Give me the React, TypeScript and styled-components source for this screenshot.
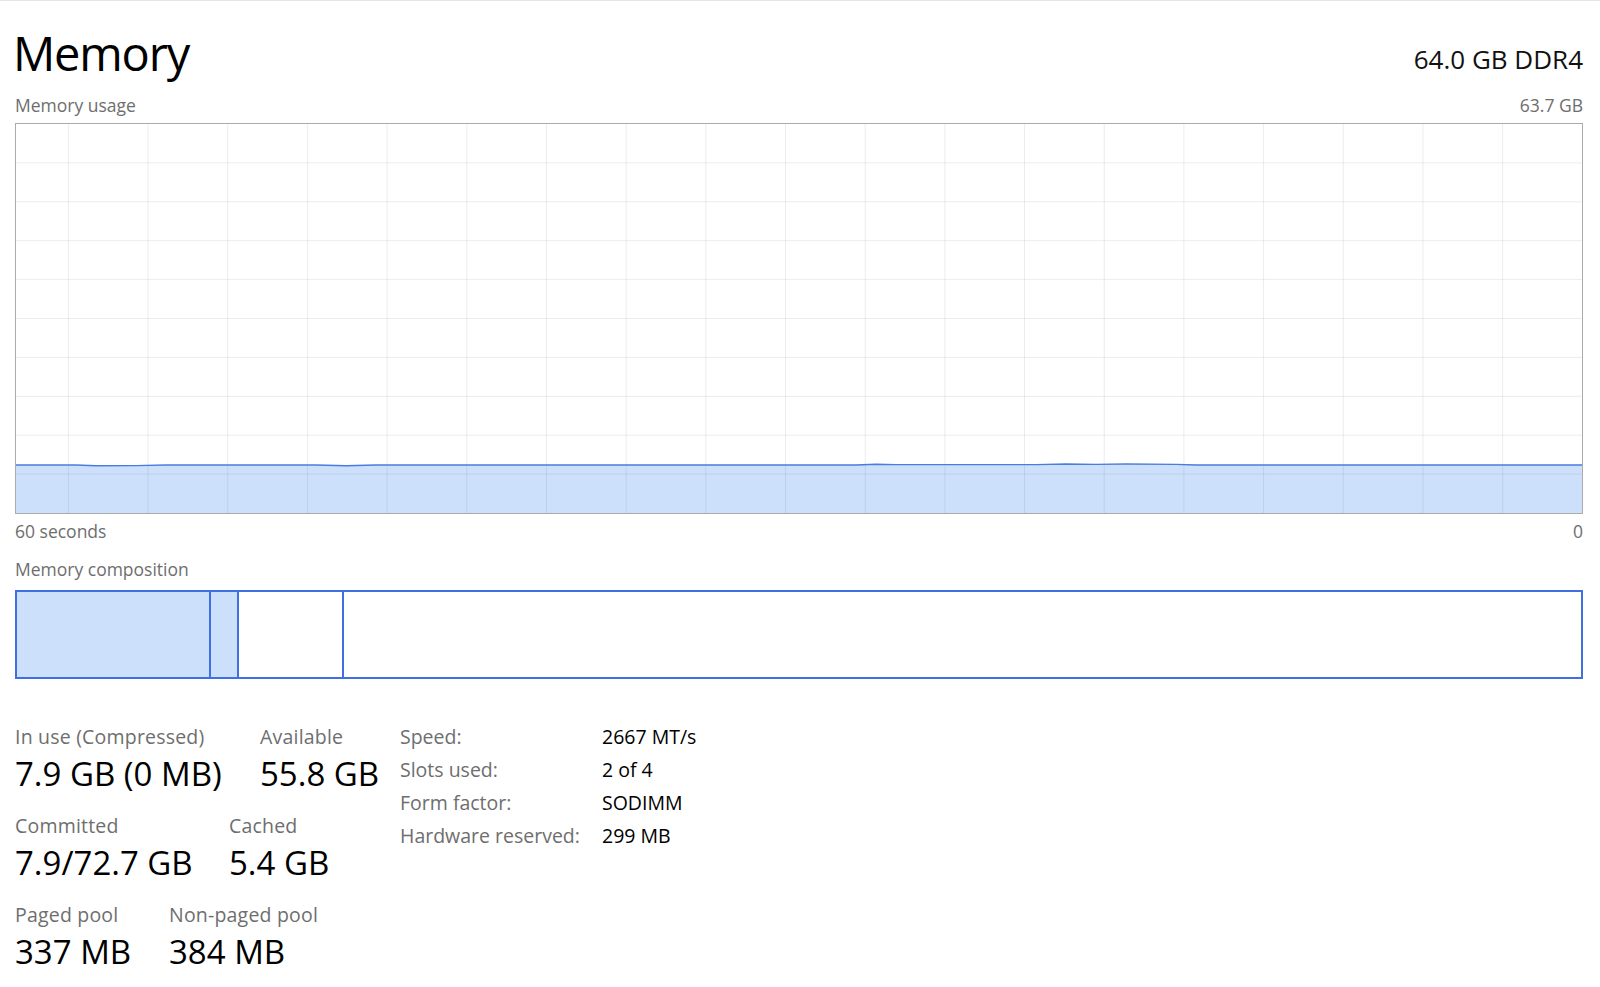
import styled, { createGlobalStyle } from "styled-components";

const GlobalStyle = createGlobalStyle`
  html, body {
    margin: 0;
    padding: 0;
    background: #ffffff;
  }
  body {
    font-family: "Open Sans", "Noto Sans", sans-serif;
    color: #000000;
  }
`;

type Stat = { label: string; value: string };

const statRows: { width: number; items: Stat[] }[] = [
  {
    width: 245,
    items: [
      { label: "In use (Compressed)", value: "7.9 GB (0 MB)" },
      { label: "Available", value: "55.8 GB" },
    ],
  },
  {
    width: 214,
    items: [
      { label: "Committed", value: "7.9/72.7 GB" },
      { label: "Cached", value: "5.4 GB" },
    ],
  },
  {
    width: 154,
    items: [
      { label: "Paged pool", value: "337 MB" },
      { label: "Non-paged pool", value: "384 MB" },
    ],
  },
];

const specs: Stat[] = [
  { label: "Speed:", value: "2667 MT/s" },
  { label: "Slots used:", value: "2 of 4" },
  { label: "Form factor:", value: "SODIMM" },
  { label: "Hardware reserved:", value: "299 MB" },
];

// composition segments: width incl. divider, filled or not
const segments = [
  { width: 194, filled: true },
  { width: 28, filled: true },
  { width: 105, filled: false },
  { width: 0, filled: false },
];

const CHART_W = 1566;
const CHART_H = 389;

const UsageChart = () => {
  const cols = Array.from({ length: 19 }, (_, i) => 52.4 + i * 79.68);
  const rows = Array.from({ length: 9 }, (_, i) => (i + 1) * (CHART_H / 10));
  const line =
    "M0 341 L60 341 L80 341.8 L120 341.6 L150 341 L300 341 L330 341.8 L360 341 L840 341 L860 340.2 L880 340.6 L1020 340.6 L1050 340 L1080 340.4 L1110 340 L1160 340.4 L1180 341 L1566 341";
  return (
    <svg
      width="100%"
      height="100%"
      viewBox={`0 0 ${CHART_W} ${CHART_H}`}
      preserveAspectRatio="none"
    >
      <path d={`${line} L1566 ${CHART_H} L0 ${CHART_H} Z`} fill="#cde0fb" />
      {cols.map((x) => (
        <line key={x} x1={x} x2={x} y1={0} y2={CHART_H} stroke="rgba(0,0,0,0.075)" strokeWidth={1} />
      ))}
      {rows.map((y) => (
        <line key={y} x1={0} x2={CHART_W} y1={y} y2={y} stroke="rgba(0,0,0,0.075)" strokeWidth={1} />
      ))}
      <path d={line} fill="none" stroke="#4a7be0" strokeWidth={1.4} />
    </svg>
  );
};

const App = () => {
  return (
    <Page>
      <GlobalStyle />
      <Header>
        <Title>Memory</Title>
        <Capacity>64.0 GB DDR4</Capacity>
      </Header>
      <Caption>
        <span>Memory usage</span>
        <span>63.7 GB</span>
      </Caption>
      <Graph>
        <UsageChart />
      </Graph>
      <AxisRow>
        <span>60 seconds</span>
        <span>0</span>
      </AxisRow>
      <CompositionTitle>Memory composition</CompositionTitle>
      <CompositionBar>
        {segments.map((s, i) => (
          <Segment key={i} $width={s.width} $filled={s.filled} />
        ))}
      </CompositionBar>
      <Details>
        <Stats>
          {statRows.map((row, i) => (
            <StatRow key={i} $first={row.width}>
              {row.items.map((it) => (
                <StatItem key={it.label}>
                  <StatLabel>{it.label}</StatLabel>
                  <StatValue>{it.value}</StatValue>
                </StatItem>
              ))}
            </StatRow>
          ))}
        </Stats>
        <SpecTable>
          {specs.map((s) => (
            <SpecRow key={s.label}>
              <SpecLabel>{s.label}</SpecLabel>
              <SpecValue>{s.value}</SpecValue>
            </SpecRow>
          ))}
        </SpecTable>
      </Details>
    </Page>
  );
};

const Page = styled.div`
  box-sizing: border-box;
  width: 1600px;
  height: 987px;
  border-top: 1px solid #e6e6e6;
  padding: 0 17px 0 15px;
  overflow: hidden;
`;

const Header = styled.div`
  display: flex;
  justify-content: space-between;
  align-items: flex-start;
  padding-top: 28px;
`;

const Title = styled.h1`
  margin: 0 0 0 -2px;
  font-size: 47px;
  line-height: 48px;
  font-weight: 400;
  letter-spacing: -1.2px;
  color: #000;
`;

const Capacity = styled.div`
  margin-top: 17px;
  font-size: 26px;
  line-height: 26px;
  color: #111;
`;

const Caption = styled.div`
  display: flex;
  justify-content: space-between;
  margin-top: 16px;
  font-size: 17.5px;
  line-height: 24px;
  color: #6e6e6e;
`;

const Graph = styled.div`
  box-sizing: border-box;
  margin-top: 6px;
  height: 391px;
  border: 1px solid #ababab;
  background: #ffffff;
  line-height: 0;
`;

const AxisRow = styled(Caption)`
  margin-top: 5px;
`;

const CompositionTitle = styled.div`
  margin-top: 14px;
  font-size: 17.5px;
  line-height: 24px;
  color: #6e6e6e;
`;

const CompositionBar = styled.div`
  box-sizing: border-box;
  display: flex;
  margin-top: 9px;
  height: 89px;
  border: 2px solid #4070e0;
`;

const Segment = styled.div<{ $width: number; $filled: boolean }>`
  box-sizing: border-box;
  flex: ${(p) => (p.$width ? `0 0 ${p.$width}px` : "1 1 auto")};
  background: ${(p) => (p.$filled ? "#cde0fb" : "#ffffff")};
  border-right: ${(p) => (p.$width ? "2px solid #4070e0" : "none")};
`;

const Details = styled.div`
  display: grid;
  grid-template-columns: 385px auto;
  margin-top: 45px;
`;

const Stats = styled.div`
  display: flex;
  flex-direction: column;
  gap: 19px;
`;

const StatRow = styled.div<{ $first: number }>`
  display: grid;
  grid-template-columns: ${(p) => p.$first}px auto;
`;

const StatItem = styled.div`
  display: flex;
  flex-direction: column;
  gap: 4px;
`;

const StatLabel = styled.div`
  font-size: 19.5px;
  line-height: 26px;
  letter-spacing: 0.2px;
  color: #6e6e6e;
  white-space: nowrap;
`;

const StatValue = styled.div`
  font-size: 33px;
  line-height: 40px;
  color: #000;
  white-space: nowrap;
`;

const SpecTable = styled.div`
  display: flex;
  flex-direction: column;
  gap: 7px;
`;

const SpecRow = styled.div`
  display: grid;
  grid-template-columns: 202px auto;
  font-size: 19.5px;
  line-height: 26px;
  white-space: nowrap;
`;

const SpecLabel = styled.span`
  color: #6e6e6e;
`;

const SpecValue = styled.span`
  color: #000;
`;

export default App;
